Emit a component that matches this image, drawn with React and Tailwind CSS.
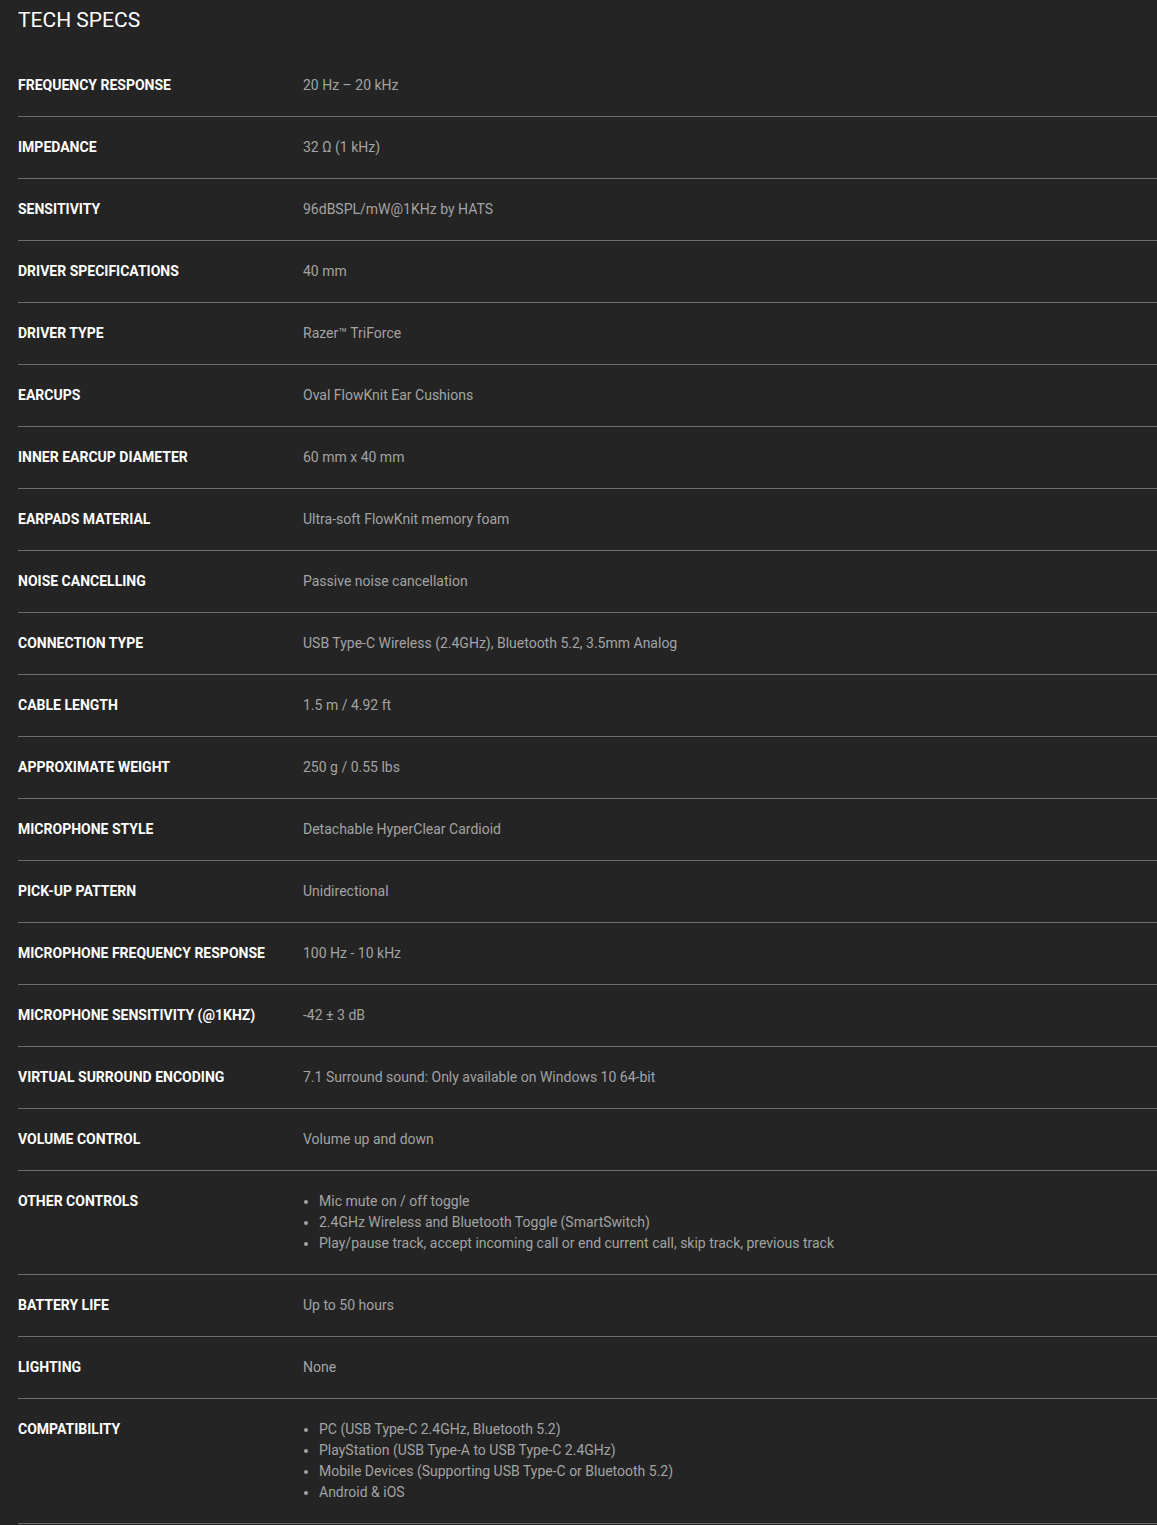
import React from 'react';

const specs = [
  { label: 'Frequency Response', value: '20 Hz – 20 kHz' },
  { label: 'Impedance', value: '32 Ω (1 kHz)' },
  { label: 'Sensitivity', value: '96dBSPL/mW@1KHz by HATS' },
  { label: 'Driver Specifications', value: '40 mm' },
  { label: 'Driver Type', value: 'Razer™ TriForce' },
  { label: 'Earcups', value: 'Oval FlowKnit Ear Cushions' },
  { label: 'Inner Earcup Diameter', value: '60 mm x 40 mm' },
  { label: 'Earpads Material', value: 'Ultra-soft FlowKnit memory foam' },
  { label: 'Noise Cancelling', value: 'Passive noise cancellation' },
  { label: 'Connection Type', value: 'USB Type-C Wireless (2.4GHz), Bluetooth 5.2, 3.5mm Analog' },
  { label: 'Cable Length', value: '1.5 m / 4.92 ft' },
  { label: 'Approximate Weight', value: '250 g / 0.55 lbs' },
  { label: 'Microphone Style', value: 'Detachable HyperClear Cardioid' },
  { label: 'Pick-up Pattern', value: 'Unidirectional' },
  { label: 'Microphone Frequency Response', value: '100 Hz - 10 kHz' },
  { label: 'Microphone Sensitivity (@1KHZ)', value: '-42 ± 3 dB' },
  { label: 'Virtual Surround Encoding', value: '7.1 Surround sound: Only available on Windows 10 64-bit' },
  { label: 'Volume Control', value: 'Volume up and down' },
  {
    label: 'Other Controls',
    list: [
      'Mic mute on / off toggle',
      '2.4GHz Wireless and Bluetooth Toggle (SmartSwitch)',
      'Play/pause track, accept incoming call or end current call, skip track, previous track',
    ],
  },
  { label: 'Battery Life', value: 'Up to 50 hours' },
  { label: 'Lighting', value: 'None' },
  {
    label: 'Compatibility',
    list: [
      'PC (USB Type-C 2.4GHz, Bluetooth 5.2)',
      'PlayStation (USB Type-A to USB Type-C 2.4GHz)',
      'Mobile Devices (Supporting USB Type-C or Bluetooth 5.2)',
      'Android & iOS',
    ],
  },
];

const App = () => {
  return (
    <div className="min-h-screen bg-[#242424] pl-[18px] font-['Roboto','Liberation_Sans',sans-serif]">
      {/* Title */}
      <div className="h-[55px] pt-[6px]">
        <h2 className="text-[21px] leading-[28px] text-white">TECH SPECS</h2>
      </div>

      {/* Spec rows */}
      <div>
        {specs.map((spec, i) => (
          <div key={i} className="flex border-b border-[#696c72] py-5 text-[14px] leading-[21px]">
            <div className="w-[285px] shrink-0 font-bold uppercase text-white">{spec.label}</div>
            <div className="text-[#a3a3a3]">
              {spec.list ? (
                <ul>
                  {spec.list.map((item, j) => (
                    <li key={j} className="flex items-center">
                      <span className="ml-[1px] mr-[11px] h-[4px] w-[4px] rounded-full bg-[#a3a3a3]"></span>
                      {item}
                    </li>
                  ))}
                </ul>
              ) : (
                spec.value
              )}
            </div>
          </div>
        ))}
      </div>
    </div>
  );
};

export default App;
